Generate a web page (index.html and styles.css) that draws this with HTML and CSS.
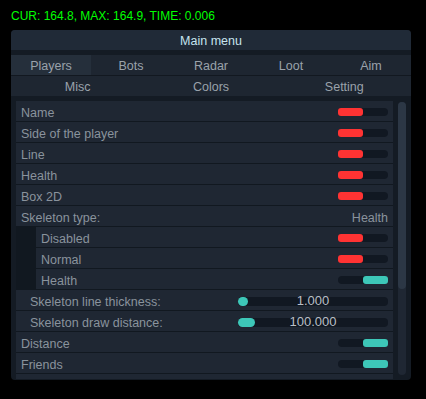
FILE: index.html
```html
<!DOCTYPE html>
<html>
<head>
<meta charset="utf-8">
<link rel="stylesheet" href="styles.css">
</head>
<body>
<div class="status">CUR: 164.8, MAX: 164.9, TIME: 0.006</div>
<div class="window">
  <div class="title">Main menu</div>
  <div class="tabs">
    <div class="tabrow five">
      <div class="tab active">Players</div>
      <div class="tab">Bots</div>
      <div class="tab">Radar</div>
      <div class="tab">Loot</div>
      <div class="tab">Aim</div>
    </div>
    <div class="tabrow three">
      <div class="tab">Misc</div>
      <div class="tab">Colors</div>
      <div class="tab">Setting</div>
    </div>
  </div>
  <div class="content">
    <div class="list">
      <div class="row"><span class="label">Name</span><div class="toggle"><div class="knob off"></div></div></div>
      <div class="row"><span class="label">Side of the player</span><div class="toggle"><div class="knob off"></div></div></div>
      <div class="row"><span class="label">Line</span><div class="toggle"><div class="knob off"></div></div></div>
      <div class="row"><span class="label">Health</span><div class="toggle"><div class="knob off"></div></div></div>
      <div class="row"><span class="label">Box 2D</span><div class="toggle"><div class="knob off"></div></div></div>
      <div class="row"><span class="label">Skeleton type:</span><span class="label">Health</span></div>
      <div class="row sub"><span class="label">Disabled</span><div class="toggle"><div class="knob off"></div></div></div>
      <div class="row sub"><span class="label">Normal</span><div class="toggle"><div class="knob off"></div></div></div>
      <div class="row sub"><span class="label">Health</span><div class="toggle on"><div class="knob"></div></div></div>
      <div class="row slider-row"><span class="label">Skeleton line thickness:</span><div class="slider"><div class="fill" style="width:10px"></div><span class="num">1.000</span></div></div>
      <div class="row slider-row"><span class="label">Skeleton draw distance:</span><div class="slider"><div class="fill" style="width:17px"></div><span class="num">100.000</span></div></div>
      <div class="row"><span class="label">Distance</span><div class="toggle on"><div class="knob"></div></div></div>
      <div class="row"><span class="label">Friends</span><div class="toggle on"><div class="knob"></div></div></div>
      <div class="row"></div>
    </div>
    <div class="scrollbar"><div class="thumb"></div></div>
  </div>
</div>
</body>
</html>
```
FILE: styles.css
```css
* { box-sizing: border-box; }
body {
  margin: 0;
  background: #000;
  font-family: "Liberation Sans", Arial, sans-serif;
  font-size: 12.5px;
}
.status {
  color: #00ff00;
  font-size: 12px;
  padding: 9px 0 0 11px;
  line-height: 14px;
  height: 30px;
}
.window {
  margin-left: 11px;
  width: 400px;
  height: 350px;
  background: #141b24;
  border-radius: 4px;
  overflow: hidden;
  display: flex;
  flex-direction: column;
}
.title {
  height: 20px;
  padding-top: 2px;
  line-height: 18px;
  text-align: center;
  background: #202a37;
  color: #c6e4ee;
  margin-bottom: 5px;
}
.tabs {
  display: flex;
  flex-direction: column;
  gap: 1px;
  background: #121820;
}
.tabrow {
  display: grid;
  height: 20px;
}
.tabrow.five { grid-template-columns: repeat(5, 80px); }
.tabrow.three { grid-template-columns: repeat(3, 1fr); }
.tab {
  background: #1e2631;
  color: #9aa2ab;
  text-align: center;
  padding-top: 2px;
  line-height: 18px;
}
.tab.active { background: #252f3b; }
.content {
  display: flex;
  margin-top: 5px;
  padding: 0 5px;
  gap: 5px;
  height: 278px;
}
.list {
  flex: 1;
  display: flex;
  flex-direction: column;
  gap: 1px;
  background: #111820;
  overflow: hidden;
}
.row {
  flex: none;
  height: 20px;
  background: #1f2733;
  color: #8a939d;
  display: flex;
  align-items: center;
  justify-content: space-between;
  padding: 2px 5px 0;
}
.label {
  padding-top: 2px;
  line-height: 14px;
}
.row.sub { margin-left: 20px; }
.slider-row { padding-left: 14px; }
.toggle {
  width: 50px;
  height: 8px;
  border-radius: 4px;
  background: #111822;
  display: flex;
}
.toggle.on { justify-content: flex-end; }
.knob {
  width: 25px;
  height: 8px;
  border-radius: 3px;
  background: #3dc7b8;
}
.knob.off { background: #ff3333; }
.slider {
  position: relative;
  width: 150px;
  height: 9px;
  border-radius: 4px;
  background: #111822;
  display: flex;
  align-items: center;
  justify-content: center;
}
.fill {
  position: absolute;
  left: 0;
  top: 0;
  height: 9px;
  border-radius: 5px;
  background: #3dc7b8;
}
.num {
  position: relative;
  color: #b9bfc6;
  line-height: 12px;
  font-size: 13px;
}
.scrollbar {
  width: 8px;
  height: 273px;
  margin-top: 1px;
  border-radius: 4px;
  background: #1f2733;
  display: flex;
  flex-direction: column;
}
.thumb {
  height: 187px;
  border-radius: 4px;
  background: #2c3745;
}
```
